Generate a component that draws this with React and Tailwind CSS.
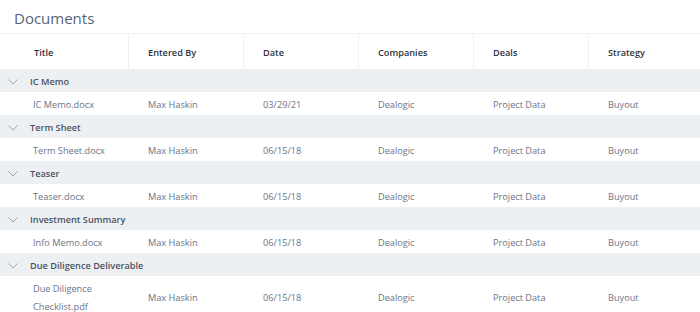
import React from 'react';

const columns = ['Title', 'Entered By', 'Date', 'Companies', 'Deals', 'Strategy'];

const groups = [
  { name: 'IC Memo', file: 'IC Memo.docx', date: '03/29/21' },
  { name: 'Term Sheet', file: 'Term Sheet.docx', date: '06/15/18' },
  { name: 'Teaser', file: 'Teaser.docx', date: '06/15/18' },
  { name: 'Investment Summary', file: 'Info Memo.docx', date: '06/15/18' },
  { name: 'Due Diligence Deliverable', file: ['Due Diligence', 'Checklist.pdf'], date: '06/15/18' },
];

const grid = 'grid grid-cols-[129px_115px_115px_115px_115px_1fr]';

const Chevron = () => (
  <svg width="10" height="6" viewBox="0 0 10 6" fill="none" className="mr-[12px]">
    <path d="M0.5 0.5 L5 5 L9.5 0.5" stroke="#9aa3ae" strokeWidth="1" />
  </svg>
);

const App = () => {
  return (
    <div className="w-[700px] h-[312px] overflow-hidden bg-white text-[9.2px] font-['Open_Sans',sans-serif]">
      <div className="h-[33px] pl-[14px] pt-[7px] text-[15px] leading-[22px] text-[#56627a]">Documents</div>

      {/* header */}
      <div className={`${grid} h-[36px] border-t border-[#eef0f2]`}>
        {columns.map((col, i) => (
          <div
            key={col}
            className={`flex items-center pt-[2px] font-semibold text-[#2e3440] ${i === 0 ? 'pl-[34px]' : 'pl-[19px]'} ${i < columns.length - 1 ? 'border-r border-[#eef0f2]' : ''}`}
          >
            {col}
          </div>
        ))}
      </div>

      {groups.map((g) => (
        <div key={g.name}>
          <div className="flex items-center h-[23px] pl-[8px] pt-[2px] bg-[#edf0f3] font-semibold text-[#4a5263]">
            <Chevron />
            {g.name}
          </div>
          <div className={`${grid} pt-[2px] text-[#6b7385] ${Array.isArray(g.file) ? 'h-[42px]' : 'h-[23px]'}`}>
            <div className="flex flex-col justify-center pl-[33px] leading-[18px]">
              {Array.isArray(g.file) ? g.file.map((l) => <span key={l}>{l}</span>) : g.file}
            </div>
            <div className="flex items-center pl-[19px]">Max Haskin</div>
            <div className="flex items-center pl-[19px]">{g.date}</div>
            <div className="flex items-center pl-[19px]">Dealogic</div>
            <div className="flex items-center pl-[19px]">Project Data</div>
            <div className="flex items-center pl-[19px]">Buyout</div>
          </div>
        </div>
      ))}
    </div>
  );
};

export default App;
